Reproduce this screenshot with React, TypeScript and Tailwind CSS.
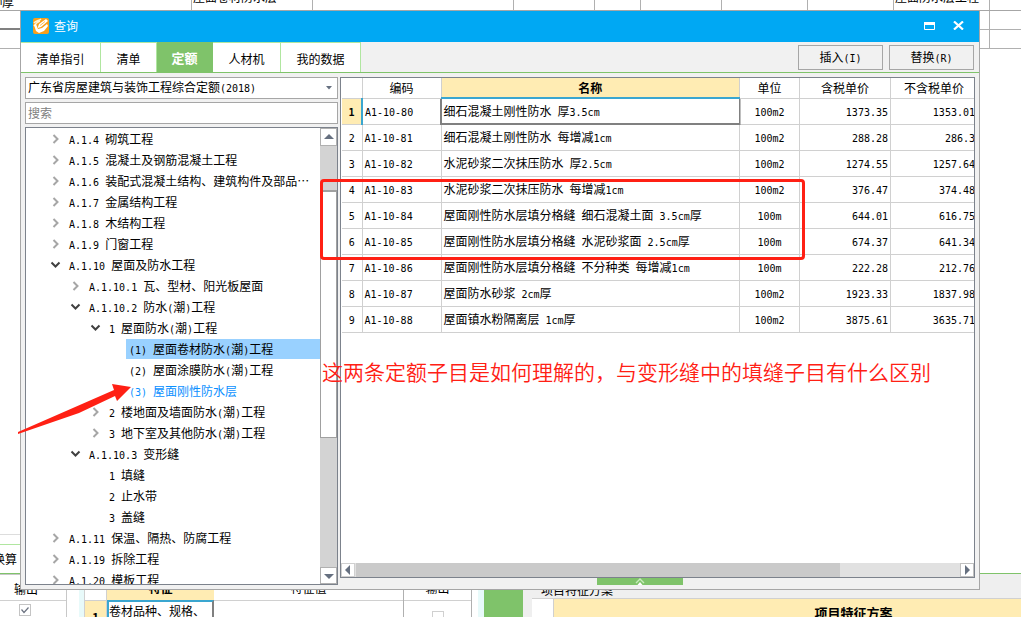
import { Fragment, useState } from 'react'
import clsx from 'clsx'

type Node = { text: string; level: number; state?: 'open' | 'closed' }

const TREE: Node[] = [
  { text: 'A.1.4 砌筑工程', level: 0, state: 'closed' },
  { text: 'A.1.5 混凝土及钢筋混凝土工程', level: 0, state: 'closed' },
  { text: 'A.1.6 装配式混凝土结构、建筑构件及部品⋯', level: 0, state: 'closed' },
  { text: 'A.1.7 金属结构工程', level: 0, state: 'closed' },
  { text: 'A.1.8 木结构工程', level: 0, state: 'closed' },
  { text: 'A.1.9 门窗工程', level: 0, state: 'closed' },
  { text: 'A.1.10 屋面及防水工程', level: 0, state: 'open' },
  { text: 'A.1.10.1 瓦、型材、阳光板屋面', level: 1, state: 'closed' },
  { text: 'A.1.10.2 防水(潮)工程', level: 1, state: 'open' },
  { text: '1 屋面防水(潮)工程', level: 2, state: 'open' },
  { text: '(1) 屋面卷材防水(潮)工程', level: 3 },
  { text: '(2) 屋面涂膜防水(潮)工程', level: 3 },
  { text: '(3) 屋面刚性防水层', level: 3 },
  { text: '2 楼地面及墙面防水(潮)工程', level: 2, state: 'closed' },
  { text: '3 地下室及其他防水(潮)工程', level: 2, state: 'closed' },
  { text: 'A.1.10.3 变形缝', level: 1, state: 'open' },
  { text: '1 填缝', level: 2 },
  { text: '2 止水带', level: 2 },
  { text: '3 盖缝', level: 2 },
  { text: 'A.1.11 保温、隔热、防腐工程', level: 0, state: 'closed' },
  { text: 'A.1.19 拆除工程', level: 0, state: 'closed' },
  { text: 'A.1.20 模板工程', level: 0, state: 'closed' },
]

const INDENT = ['pl-[22px]', 'pl-[42px]', 'pl-[62px]', 'pl-[82px]']

const ROWS = [
  ['A1-10-80', '细石混凝土刚性防水 厚3.5cm', '100m2', '1373.35', '1353.01'],
  ['A1-10-81', '细石混凝土刚性防水 每增减1cm', '100m2', '288.28', '286.3'],
  ['A1-10-82', '水泥砂浆二次抹压防水 厚2.5cm', '100m2', '1274.55', '1257.64'],
  ['A1-10-83', '水泥砂浆二次抹压防水 每增减1cm', '100m2', '376.47', '374.48'],
  ['A1-10-84', '屋面刚性防水层填分格缝 细石混凝土面 3.5cm厚', '100m', '644.01', '616.75'],
  ['A1-10-85', '屋面刚性防水层填分格缝 水泥砂浆面 2.5cm厚', '100m', '674.37', '641.34'],
  ['A1-10-86', '屋面刚性防水层填分格缝 不分种类 每增减1cm', '100m', '222.28', '212.76'],
  ['A1-10-87', '屋面防水砂浆 2cm厚', '100m2', '1923.33', '1837.98'],
  ['A1-10-88', '屋面镇水粉隔离层 1cm厚', '100m2', '3875.61', '3635.71'],
]

const TABS = [
  { name: '清单指引', width: 'w-20' },
  { name: '清单', width: 'w-14' },
  { name: '定额', width: 'w-14' },
  { name: '人材机', width: 'w-17' },
  { name: '我的数据', width: 'w-20' },
]

/* Half-width characters take 6px, full-width ones 12px */
function Txt({ children }: { children: string }) {
  return (
    <>
      {children.split(/([\x20-\x7e]+)/).map((part, i) =>
        i % 2 ? (
          <span key={i} className="whitespace-pre font-['DejaVu_Sans_Mono',monospace] text-[10px]">{part}</span>
        ) : (
          <Fragment key={i}>{part}</Fragment>
        ),
      )}
    </>
  )
}

function Chevron({ state }: { state?: 'open' | 'closed' }) {
  return (
    <svg viewBox="0 0 14 12" className="h-3 w-3.5 shrink-0" fill="none" strokeWidth="2" aria-hidden>
      {state === 'closed' && <path d="M5.5 2l4 4-4 4" stroke="#a6a6a6" />}
      {state === 'open' && <path d="M3.5 3.5l4 4 4-4" stroke="#404040" />}
    </svg>
  )
}

function Triangle({ points }: { points: string }) {
  return (
    <svg viewBox="0 0 10 10" className="size-2.5" aria-hidden>
      <polygon points={points} fill="#667080" />
    </svg>
  )
}

function TopBackground() {
  return (
    <div className="shrink-0">
      <div className="flex h-[11px] items-stretch border-b border-[#a6a6a6] leading-3 whitespace-nowrap">
        {['w-[192px]', 'w-[121px]', 'w-[201px]', 'w-[81px]', 'w-[46px]', 'w-[81px]', 'w-[86px]', 'w-[86px]', 'w-24'].map((w, i) => (
          <div
            key={i}
            className={clsx('flex shrink-0 items-end overflow-hidden border-r border-[#b0b0b0]', w, i === 0 ? 'pb-[2px]' : 'pb-[7px]')}
          >
            {i === 0 && <span className="flex w-3.5 justify-end overflow-hidden"><Txt>m厚</Txt></span>}
            {i === 1 && <span className="pl-px">屋面卷材防水层</span>}
            {i === 8 && <span className="pl-px">屋面防水层工程</span>}
          </div>
        ))}
      </div>
      <div className="flex justify-between">
        <div className="w-5">
          <div className="h-[19px] border-b-2 border-[#808080]" />
          <div className="h-[19px] border-b border-[#b0b0b0]" />
        </div>
        <div className="flex w-[42px]">
          <div className="w-[11px] border-r border-[#b0b0b0]">
            <div className="h-[19px] border-b border-[#b0b0b0]" />
            <div className="h-[19px] border-b border-[#b0b0b0]" />
          </div>
          <div className="flex-1">
            <div className="h-[19px] border-b border-[#b0b0b0]" />
            <div className="h-[19px] border-b border-[#b0b0b0]" />
          </div>
        </div>
      </div>
    </div>
  )
}

function BottomBackground() {
  return (
    <div className="mt-auto flex h-[83px] shrink-0 items-end overflow-hidden">
      <div className="flex h-full w-[478px] shrink-0 flex-col">
        <div className="h-2.5 shrink-0 border-t border-[#dddddd]" />
        <div className="h-[30px] shrink-0 border-t border-b border-t-[#b0e6a0] border-b-[#7fc36a] pt-1.5 leading-4">
          <span className="flex w-[17px] justify-end overflow-hidden whitespace-nowrap">换算</span>
        </div>
        <div className="flex flex-1">
          <div className="w-[67px] border-t border-r border-[#c8c8c8]">
            <div className="h-[26px] border-b border-[#d0d0d0] pt-1.5 pl-3.5 leading-4">输出</div>
            <label className="flex justify-center pt-[3px] pr-4">
              <input type="checkbox" defaultChecked aria-label="输出" className="peer sr-only" />
              <svg viewBox="0 0 12 12" className="size-3" fill="none" aria-hidden>
                <rect x=".5" y=".5" width="11" height="11" stroke="#c4c4c4" />
                <path d="M2.5 5.5l2.5 3 4.5-5" stroke="#6b7280" strokeWidth="1.2" />
              </svg>
            </label>
          </div>
          <div className="w-3" />
          <div className="w-1.5 border-r border-[#d0d0d0] bg-[#e8fafa]" />
          <div className="w-[22px] border-r border-[#d0d0d0]">
            <div className="h-[27px] border-b border-[#d0d0d0]" />
            <div className="h-8 bg-[#ffecb3] pt-2 text-center font-bold">1</div>
          </div>
          <div className="w-[107px]">
            <div className="h-[26px] bg-[#ffecb3] pt-1.5 text-center leading-4 font-bold">特征</div>
            <div className="h-8 border-t-2 border-r-2 border-l-2 border-t-[#3aa6d0] border-r-[#808080] border-l-[#3aa6d0] pt-px leading-4 whitespace-nowrap">
              卷材品种、规格、
            </div>
          </div>
          <div className="w-[190px] border-r border-[#b0b0b0]">
            <div className="h-[27px] border-b border-[#d0d0d0] pt-1.5 text-center leading-4">特征值</div>
          </div>
          <div className="w-[68px] border-r border-[#b0b0b0]">
            <div className="h-[27px] border-b border-[#d0d0d0] pt-1.5 text-center leading-4">输出</div>
            <label className="flex justify-center pt-2.5">
              <input type="checkbox" aria-label="输出" className="size-3 shrink-0 appearance-none border border-[#d0d0d0] bg-white" />
            </label>
          </div>
          <div className="flex-1" />
        </div>
      </div>
      <div className="flex h-[44px] flex-1 border-t border-[#7fc36a] bg-[#efefef]">
        <div className="w-1.5 bg-[#e8fafa]" />
        <div className="w-[39px] bg-[#7fc36a]" />
        <div className="ml-[9px] flex flex-1 flex-col">
          <div className="h-8 pt-2 pl-[9px] leading-4">项目特征方案</div>
          <div className="flex flex-1 border-t border-[#d0d0d0]">
            <div className="w-[22px] border-r border-[#d0d0d0] bg-white" />
            <div className="flex-1 overflow-hidden bg-[#ffecb3] pt-1 pl-[132px] text-center text-[13px] leading-5 font-bold">
              项目特征方案
            </div>
          </div>
        </div>
      </div>
    </div>
  )
}

function TreePanel() {
  const [selected, setSelected] = useState(10)

  return (
    <div className="flex min-h-0 flex-1 border border-[#7c828c] bg-white">
      <ul className="min-w-0 flex-1 overflow-hidden">
        {TREE.map((node, i) => (
          <li key={node.text} className={clsx('flex h-[21px] items-center', INDENT[node.level])}>
            <Chevron state={node.state} />
            <button
              onClick={() => setSelected(i)}
              className={clsx(
                'h-5 min-w-0 flex-1 overflow-hidden text-left leading-5 whitespace-nowrap',
                node.level === 3 ? 'ml-1 pl-[3px]' : 'pl-[7px]',
                selected === i && 'bg-[#99d1ff]',
                i === 12 && 'text-[#0a90ff]',
              )}
            >
              <Txt>{node.text}</Txt>
            </button>
          </li>
        ))}
      </ul>
      <div className="flex w-[17px] flex-col bg-[#d3d3d3]">
        <button aria-label="向上滚动" className="flex h-[18px] shrink-0 items-center justify-center border border-[#b0b0b0] bg-white">
          <Triangle points="5,2 10,7 0,7" />
        </button>
        <div className="flex flex-1 flex-col">
          <div className="h-[44px]" />
          <div className="h-[248px] border border-t-2 border-[#a0a0a0] bg-white" />
        </div>
        <button aria-label="向下滚动" className="flex h-[17px] shrink-0 items-center justify-center border border-[#b0b0b0] bg-white">
          <Triangle points="0,3 10,3 5,8" />
        </button>
      </div>
    </div>
  )
}

function QuotaTable() {
  return (
    <table className="w-[calc(100%+4px)] table-fixed border-collapse">
      <colgroup>
        <col className="w-5" />
        <col className="w-[79px]" />
        <col />
        <col className="w-[60px]" />
        <col className="w-[91px]" />
        <col className="w-[87px]" />
      </colgroup>
      <thead>
        <tr className="h-5 [&>th]:border-r [&>th]:border-b [&>th]:border-[#d0d0d0] [&>th]:p-0 [&>th]:font-normal">
          <th aria-label="序号" />
          <th>编码</th>
          <th className="border-b-2! border-b-[#3aa6d0]! bg-[#ffecb3] font-bold!">名称</th>
          <th>单位</th>
          <th>含税单价</th>
          <th>不含税单价</th>
        </tr>
      </thead>
      <tbody>
        {ROWS.map(([code, name, unit, taxed, untaxed], i) => (
          <tr key={code} className="h-[26px] [&>*]:border-r [&>*]:border-b [&>*]:border-[#d0d0d0] [&>*]:pt-0.5 [&>*]:pb-0 [&>*]:whitespace-nowrap">
            <th className={clsx('px-0', i === 0 ? 'border-r-2! border-r-[#3aa6d0]! bg-[#ffecb3] font-bold' : 'font-normal')}>
              <Txt>{String(i + 1)}</Txt>
            </th>
            <td className="pl-0.5"><Txt>{code}</Txt></td>
            <td className={clsx('pl-0.5', i === 0 && 'outline-2 -outline-offset-1 outline-[#808080] [clip-path:inset(1px_-1px_-1px_-1px)]')}>
              <Txt>{name}</Txt>
            </td>
            <td className="text-center"><Txt>{unit}</Txt></td>
            <td className="pr-0.5 text-right"><Txt>{taxed}</Txt></td>
            <td className="pr-0.5 text-right"><Txt>{untaxed}</Txt></td>
          </tr>
        ))}
      </tbody>
    </table>
  )
}

function QueryDialog() {
  const [tab, setTab] = useState('定额')

  return (
    <section
      role="dialog"
      aria-label="查询"
      className="absolute top-2.5 right-[41px] bottom-[27px] left-5 flex flex-col border border-[#a6a6a6] bg-[#f1f1f1]"
    >
      <header className="flex h-[31px] shrink-0 items-center bg-[#00a8f3] pr-[15px] pb-0.5 pl-3 text-white">
        <svg viewBox="0 0 16 16" className="size-4" aria-hidden>
          <rect width="16" height="16" rx="2" fill="#f9a01b" />
          <path d="M1 5c2-3 5-2 7-4M1 8c2-3 3-4 6-5" stroke="#fff3d6" strokeWidth="1.4" fill="none" />
          <path d="M5 9l1-3 7-5 2 2-7 6-3 1z" fill="#fff" />
          <path d="M1 7l2-1 2 5 4-1 5-4 1 2-4 5-5 2-3-2z" fill="#fff" />
          <path d="M7 7.500l5-4" stroke="#f9a01b" strokeWidth=".7" />
        </svg>
        <h1 className="flex-1 pl-[5px]">查询</h1>
        <button aria-label="最大化" className="mr-[18px]">
          <svg viewBox="0 0 11 8" className="h-2 w-[11px]" aria-hidden>
            <path d="M.5.5h10v7H.5z" fill="none" stroke="#fff" />
            <path d="M0 0h11v3H0z" fill="#fff" />
          </svg>
        </button>
        <button aria-label="关闭">
          <svg viewBox="0 0 11 9" className="h-[9px] w-[11px]" stroke="#fff" strokeWidth="2.2" aria-hidden>
            <path d="M1 .5l9 8M10 .5l-9 8" />
          </svg>
        </button>
      </header>

      <nav className="flex h-[31px] shrink-0 border-b border-[#7fc36a]">
        {TABS.map(({ name, width }) => (
          <button
            key={name}
            onClick={() => setTab(name)}
            className={clsx(
              'border-t border-r pt-0.5 text-center',
              width,
              tab === name ? 'border-[#7fc36a] bg-[#7fc36a] pb-0.5 text-[13px] font-bold text-white' : 'border-[#b0e6a0] bg-white',
            )}
          >
            {name}
          </button>
        ))}
        <div className="mt-[3px] mr-[5px] ml-auto flex h-[25px] gap-1.5">
          <button className="w-[85px] border border-[#a6a6a6]"><Txt>插入(I)</Txt></button>
          <button className="w-[85px] border border-[#a6a6a6]"><Txt>替换(R)</Txt></button>
        </div>
      </nav>

      <div className="flex min-h-0 flex-1 gap-0.5 pt-1 pr-1 pl-1">
        <div className="flex w-[313px] shrink-0 flex-col gap-[3px] pb-1">
          <label className="relative block">
            <select
              aria-label="定额库"
              className="block h-[22px] w-full appearance-none border border-[#a6a6a6] bg-white pl-0.5 text-transparent"
            >
              <option>广东省房屋建筑与装饰工程综合定额(2018)</option>
            </select>
            <span aria-hidden className="pointer-events-none absolute inset-0 flex items-center justify-between pr-1.5 pl-[3px]">
              <span><Txt>广东省房屋建筑与装饰工程综合定额(2018)</Txt></span>
              <svg viewBox="0 0 6 4" className="h-1 w-1.5"><path d="M0 0h6L3 3.5z" fill="#667080" /></svg>
            </span>
          </label>
          <input
            type="search"
            aria-label="搜索"
            placeholder="搜索"
            className="h-[22px] w-full border border-[#a6a6a6] bg-white px-0.5 pb-0.5 placeholder:text-[#808080]"
          />
          <TreePanel />
        </div>

        <div className="flex min-w-0 flex-1 flex-col">
          <div className="flex min-h-0 flex-1 flex-col border border-[#7c828c] bg-white">
            <div className="min-h-0 flex-1 overflow-hidden pl-px">
              <QuotaTable />
            </div>
            <div className="flex h-3.5 shrink-0 bg-[#e1e1e1]">
              <button aria-label="向左滚动" className="flex w-3.5 items-center justify-center border border-[#d0d0d0] bg-white">
                <Triangle points="7,0 7,10 2,5" />
              </button>
              <div className="flex flex-1">
                <div className="ml-px w-4/5 bg-[#cacaca]" />
              </div>
              <button aria-label="向右滚动" className="flex w-3.5 items-center justify-center border border-[#c0c0c0] bg-white">
                <Triangle points="3,0 3,10 8,5" />
              </button>
            </div>
          </div>
          <div className="h-[11px] shrink-0">
            <button aria-label="展开" className="ml-[257px] flex h-[7px] w-[86px] items-center justify-center bg-[#7fc36a]">
              <svg viewBox="0 0 10 7" className="h-[7px] w-2.5" fill="none" aria-hidden>
                <path d="M1 5l4-4 4 4" stroke="#c8ecbc" strokeWidth="1.4" />
                <path d="M2.5 7L5 4l2.5 3" fill="#fff" />
              </svg>
            </button>
          </div>
        </div>
      </div>
    </section>
  )
}

/* Red markup drawn over the window */
function Annotations() {
  return (
    <div className="pointer-events-none absolute inset-0 text-[#ff2014]">
      <div className="absolute top-[179px] left-80 h-[81px] w-[485px] rounded-sm border-3 border-[#ff2014]" />
      <p className="absolute top-[359px] left-[322px] text-[21px] leading-6 font-[350] whitespace-nowrap">
        这两条定额子目是如何理解的，与变形缝中的填缝子目有什么区别
      </p>
      <svg viewBox="0 0 114 52" className="absolute top-[382px] left-[17px] h-[52px] w-[114px]" aria-hidden>
        <path d="M1 50L97 8 95 2l19 3-14 14-2-5L62 31 1 52z" fill="#ff2014" />
      </svg>
    </div>
  )
}

export default function App() {
  return (
    <main className="relative flex h-dvh w-full flex-col overflow-hidden bg-white font-['Noto_Sans_CJK_SC',sans-serif] text-[12px] leading-4 text-black">
      <TopBackground />
      <BottomBackground />
      <QueryDialog />
      <Annotations />
    </main>
  )
}
